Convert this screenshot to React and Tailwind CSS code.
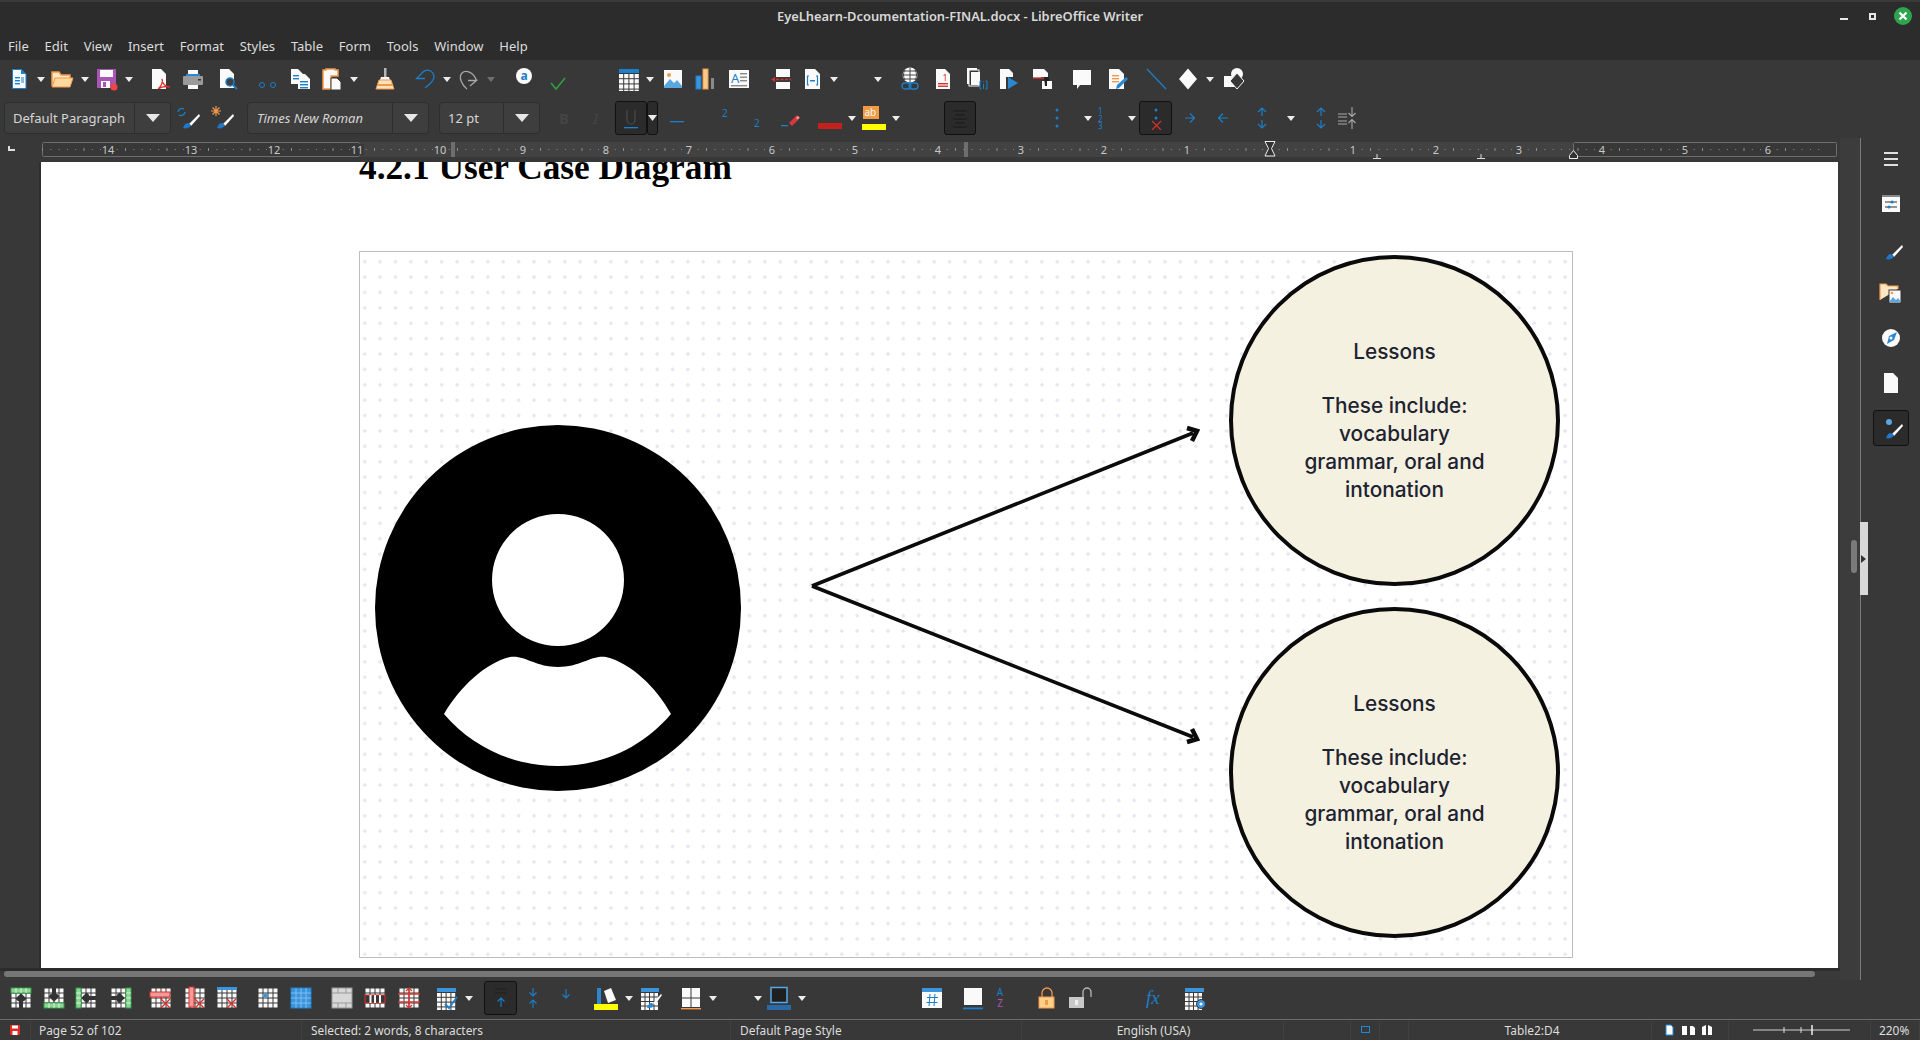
const Svg = ({ children, w = 24 }) => (
  <svg width={w} height="24" viewBox={`0 0 ${w} 24`} fill="none">
    {children}
  </svg>
);

const W = "#fafafa";
const B = "#1c7fc9";
const O = "#f2994a";
const R = "#d9302c";

// page with a folded corner, shared by many toolbar icons
const Page = ({ x = 5, y = 2, w = 14, h = 20, f = W }) => (
  <path d={`M${x} ${y}h${w - 5}l5 5v${h - 5}h-${w}z`} fill={f} />
);

const lines = (x, y, w, n, c = B, step = 3) =>
  Array.from({ length: n }).map((_, i) => (
    <rect key={i} x={x} y={y + i * step} width={w} height="1.4" fill={c} />
  ));

const Grid = ({ x = 3, y = 3, n = 4, s = 4.5, c = W }) => (
  <g>
    {Array.from({ length: n * n }).map((_, i) => (
      <rect key={i} x={x + (i % n) * s} y={y + Math.floor(i / n) * s} width={s - 1} height={s - 1} fill={c} />
    ))}
  </g>
);

const Caret = () => (
  <svg width="10" height="24" viewBox="0 0 10 24">
    <path d="M1 10h8l-4 5z" fill="#ededed" />
  </svg>
);

const NewDoc = () => (
  <Svg>
    <path d="M5.5 2.5h9l4.5 4.500v14.500h-13.500z" fill={W} stroke={B} />
    <path d="M14 2l5 5h-5z" fill={B} />
    {lines(8, 10, 5, 3)}
    <rect x="14" y="10" width="3" height="6" fill={B} opacity=".5" />
  </Svg>
);
const Open = () => (
  <Svg>
    <path d="M2 19V5h7l2 3h9v3" stroke={O} strokeWidth="1.500" fill="#fde7c3" />
    <path d="M2 20l3-9h18l-3 9z" fill="#fdd9a0" stroke={O} />
  </Svg>
);
const Save = () => (
  <Svg>
    <rect x="2" y="2" width="19" height="19" fill="#a855b5" />
    <rect x="5" y="3" width="13" height="7" fill={W} />
    <rect x="6" y="14" width="9" height="7" fill={W} />
    <rect x="8" y="15" width="3" height="5" fill="#a855b5" />
    <circle cx="19" cy="20" r="3.500" fill="#ef4444" />
  </Svg>
);
const Pdf = () => (
  <Svg>
    <Page x={4} w={14} />
    <path d="M10 22c4-3 5-8 4-10 0 4 3 8 8 8-4-1-9 0-12 2z" stroke={R} strokeWidth="1.300" />
  </Svg>
);
const Print = () => (
  <Svg>
    <rect x="7" y="3" width="10" height="5" fill={W} />
    <rect x="5" y="7" width="14" height="3" fill="#2b88d0" />
    <rect x="2" y="9" width="20" height="9" rx="1" fill="#9a9a9a" />
    <rect x="17" y="12" width="3" height="1.500" fill="#333" />
    <rect x="7" y="18" width="10" height="4" fill={W} />
  </Svg>
);
const Preview = () => (
  <Svg>
    <Page x={4} w={14} h={19} />
    <circle cx="14" cy="15" r="4" fill="#3f3f3f" stroke={B} strokeWidth="1.500" />
    <path d="M17 18l4 4" stroke={B} strokeWidth="1.800" />
  </Svg>
);
const Cut = () => (
  <Svg>
    <circle cx="7" cy="18" r="2.500" stroke={B} />
    <circle cx="18" cy="18" r="2.500" stroke={B} />
  </Svg>
);
const Copy = () => (
  <Svg>
    <Page x={3} y={2} w={12} h={15} />
    <Page x={10} y={7} w={12} h={15} />
    {lines(5, 8, 6, 2)}
    {lines(12, 14, 8, 3)}
  </Svg>
);
const Paste = () => (
  <Svg>
    <path d="M3 3h3V2h9v1h3v6h-7v13H3z" fill={W} stroke={O} strokeWidth="1.500" />
    <path d="M11 11h6l4 4v8H11z" fill={W} stroke="#383838" />
  </Svg>
);
const Clone = () => (
  <Svg>
    <rect x="11" y="1" width="2.500" height="9" fill="#b5b5b5" />
    <path d="M8 10h8l1 3H7z" fill={W} />
    <path d="M6 13h12l3 9H3z" fill="#fbe3bf" stroke={O} />
    <path d="M5 18h14" stroke={O} strokeWidth="2" />
  </Svg>
);
const Undo = () => (
  <Svg>
    <path d="M13 11.500H4.500L11 5C15 1 22 4 22 10C22 14 17 18 13 21" stroke={B} strokeWidth="1.300" />
  </Svg>
);
const Redo = () => (
  <Svg>
    <path d="M11 13.500H19.500L13 19M19.500 13.500C17 6 9 2 5 6C1 10 5 18 10 22" stroke="#a8a8a8" strokeWidth="1.300" />
  </Svg>
);
const ACircle = () => (
  <Svg>
    <circle cx="11" cy="9" r="8" fill={W} />
    <text x="11" y="13" textAnchor="middle" fontSize="12" fontWeight="700" fill={B} fontFamily="Noto Sans, sans-serif">a</text>
  </Svg>
);
const Check = () => (
  <Svg>
    <path d="M3 16l5 6 9-11" stroke="#2ea043" strokeWidth="1.500" />
  </Svg>
);
const Table = () => (
  <Svg>
    <rect x="3" y="2" width="20" height="4" fill={B} />
    <Grid x={3} y={7} n={4} s={5.2} />
  </Svg>
);
const Image = () => (
  <Svg>
    <rect x="3" y="3" width="18" height="18" fill={W} />
    <circle cx="8" cy="8" r="2" fill={O} />
    <path d="M3 19l6-7 4 4 3-3 5 6v2H3z" fill="#5aa7e0" />
  </Svg>
);
const Chart = () => (
  <Svg>
    <rect x="3" y="9" width="5" height="13" fill="#3b94dc" stroke={B} />
    <rect x="10" y="2" width="5" height="20" fill="#fbc98a" stroke={O} />
    <rect x="18" y="11" width="3" height="11" fill="#8a8a8a" />
  </Svg>
);
const TextBox = () => (
  <Svg>
    <rect x="2" y="3" width="20" height="18" fill={W} />
    <text x="4" y="16" fontSize="13" fill={B} fontFamily="Noto Sans, sans-serif">A</text>
    {lines(13, 6, 7, 3, "#888", 3.500)}
    <rect x="4" y="18" width="16" height="1.400" fill="#888" />
  </Svg>
);
const PageBreak = () => (
  <Svg>
    <rect x="7" y="2" width="14" height="8" fill={W} />
    <rect x="7" y="15" width="14" height="7" fill={W} />
    <path d="M7 12.500h15" stroke={R} strokeDasharray="3 1.500" strokeWidth="1.300" />
    <path d="M2 12.500l4-2.500v5z" fill={R} />
  </Svg>
);
const Field = () => (
  <Svg>
    <Page x={5} w={15} />
    <path d="M9 9H7.500v9H9M16 9h1.500v9H16" stroke={B} strokeWidth="1.200" />
    <rect x="10" y="13" width="5" height="1.500" fill={B} />
  </Svg>
);
const Hyper = () => (
  <Svg>
    <circle cx="12" cy="8" r="7.500" fill={W} />
    <path d="M4 8h16M12 1v14M7 3c-2 3-2 7 0 10M17 3c2 3 2 7 0 10M5 4h14M5 12h14" stroke="#383838" strokeWidth=".9" />
    <rect x="4" y="16" width="9" height="6" rx="3" stroke={B} strokeWidth="1.300" />
    <rect x="11" y="16" width="9" height="6" rx="3" stroke={B} strokeWidth="1.300" />
  </Svg>
);
const Footnote = () => (
  <Svg>
    <Page x={5} w={14} />
    <text x="14" y="14" textAnchor="middle" fontSize="9" fill={R} fontFamily="Noto Sans, sans-serif">1</text>
    {lines(7, 16, 10, 2, R, 2.500)}
  </Svg>
);
const Endnote = () => (
  <Svg>
    <rect x="3" y="1" width="10" height="16" fill={W} />
    <rect x="5" y="3" width="10" height="16" fill="#383838" stroke={W} />
    <rect x="7" y="5" width="9" height="13" fill={W} />
    <path d="M17.500 14H16v8h1.500M21.500 14H23v8h-1.500M19.500 17v5" stroke={B} />
    <rect x="19" y="14.500" width="1" height="1" fill={B} />
  </Svg>
);
const Bookmark = () => (
  <Svg>
    <path d="M3 2h9l4 4v4H9v12H3z" fill={W} />
    <path d="M11 10l10 6-10 6z" fill="#2b88d0" />
  </Svg>
);
const CrossRef = () => (
  <Svg>
    <rect x="3" y="2" width="8" height="9" fill={W} />
    <path d="M11 2h3l4 4v4h-7z" fill={W} />
    <rect x="12" y="14" width="10" height="8" fill={W} />
    <path d="M3 11h13" stroke={R} strokeWidth="1.400" />
    <path d="M14 10h5v4h-2v5h-2z" fill="#222" />
  </Svg>
);
const Comment = () => (
  <Svg>
    <path d="M3 3h18v15H10l-3 4v-4H3z" fill={W} />
  </Svg>
);
const Track = () => (
  <Svg>
    <Page x={4} w={15} />
    {lines(7, 8, 7, 3, O, 3)}
    <path d="M11 22l1-4 9-8 2 2-9 9z" fill="#2b88d0" />
  </Svg>
);
const Line = () => (
  <Svg>
    <path d="M3 2l19 20" stroke={B} strokeWidth="1.300" />
  </Svg>
);
const Diamond = () => (
  <Svg>
    <path d="M12 1.500l9 10.500-9 10.500-9-10.500z" fill={W} />
  </Svg>
);
const Shapes = () => (
  <Svg>
    <rect x="2" y="9" width="11" height="11" fill={W} />
    <circle cx="15" cy="7" r="6" fill={W} />
    <path d="M15 6l7 8-7 8-7-8z" fill="#383838" stroke={W} />
  </Svg>
);

const Brush = ({ children }) => (
  <Svg w={28}>
    {children}
    <path d="M25 8L15 18l2 2L26 10z" fill={W} />
    <path d="M14 17c-3 0-4 3-5 5 3 1 7 0 8-3z" fill="#1f77c9" />
  </Svg>
);
const Strike = () => (
  <Svg>
    <rect x="6" y="15" width="14" height="1.300" fill={B} />
  </Svg>
);
const Super = () => (
  <Svg>
    <text x="12" y="11" fontSize="10" fill={B} fontFamily="Noto Sans, sans-serif">2</text>
  </Svg>
);
const Sub = () => (
  <Svg>
    <text x="11" y="21" fontSize="10" fill={B} fontFamily="Noto Sans, sans-serif">2</text>
  </Svg>
);
const Eraser = () => (
  <Svg>
    <path d="M11 17l8-8 3 3-8 8z" fill="#d9363e" />
    <path d="M18 12l2-2 1.500 1.500-2 2z" fill="#f3a0a0" />
    <rect x="3" y="19" width="7" height="1.300" fill={B} />
  </Svg>
);
const FontColor = () => (
  <Svg>
    <rect y="17" width="24" height="6" fill="#c4201c" />
  </Svg>
);
const Highlight = () => (
  <Svg>
    <rect x="1" y="0" width="16" height="13" fill="#f39a43" />
    <text x="2.500" y="10" fontSize="10" fill={W} fontFamily="Noto Sans, sans-serif">ab</text>
    <rect y="18" width="24" height="6" fill="#ffff00" />
  </Svg>
);
const Dots = ({ red }) => (
  <Svg>
    <circle cx="12" cy="4" r="1.500" fill={B} />
    <circle cx="12" cy="12" r="1.500" fill={B} />
    {!red && <circle cx="12" cy="20" r="1.500" fill={B} />}
    {red && <path d="M8 15l9 9M17 15l-9 9" stroke={R} strokeWidth="1.200" />}
  </Svg>
);
const Nums = () => (
  <Svg w={16}>
    <text x="4" y="8" fontSize="8" fill={B} fontFamily="Noto Sans, sans-serif">1</text>
    <text x="4" y="15.500" fontSize="8" fill={B} fontFamily="Noto Sans, sans-serif">2</text>
    <text x="4" y="23" fontSize="8" fill={B} fontFamily="Noto Sans, sans-serif">3</text>
  </Svg>
);
const ArrowR = () => (
  <Svg>
    <path d="M7 12h9M12 7.500l4.500 4.500-4.500 4.500" stroke={B} strokeWidth="1.200" />
  </Svg>
);
const ArrowL = () => (
  <Svg>
    <path d="M17 12H8M12 7.500L7.500 12l4.500 4.500" stroke={B} strokeWidth="1.200" />
  </Svg>
);
const UpDown = () => (
  <Svg>
    <path d="M12 2v8M8 6l4-4 4 4M12 22v-8M8 18l4 4 4-4" stroke={B} strokeWidth="1.200" />
  </Svg>
);
const Spacing = () => (
  <Svg>
    <path d="M2 8h9M2 11h9M2 15h9M2 18h9" stroke="#a8a8a8" strokeWidth="1.200" />
    <path d="M16 1v9M12.500 7l3.500 3.500L19.500 7M16 23v-9M12.500 17l3.500-3.500 3.500 3.500" stroke="#a8a8a8" strokeWidth="1.100" />
  </Svg>
);

// bottom table toolbar
const TblInsert = ({ side }) => {
  const bars = {
    top: [2, 2, 20, 5],
    bottom: [2, 17, 20, 5],
    left: [2, 2, 5, 20],
    right: [17, 2, 5, 20],
  };
  const [x, y, w, h] = bars[side];
  const arrows = {
    top: "M8 14l4-4 4 4M12 10v12",
    bottom: "M8 9l4 4 4-4M12 13V2",
    left: "M14 8l-4 4 4 4M10 12h12",
    right: "M9 8l4 4-4 4M13 12H2",
  };
  const ticks = side === "top" || side === "bottom" ? `M7 ${y}v5M12 ${y}v5M17 ${y}v5` : `M${x} 7h5M${x} 12h5M${x} 17h5`;
  return (
    <Svg>
      <Grid x={2.500} y={2.500} n={4} s={5} />
      <path d={arrows[side]} stroke="#383838" strokeWidth="4" />
      <path d={arrows[side]} stroke="#333" strokeWidth="2.400" />
      <rect x={x} y={y} width={w} height={h} fill="#8fd694" stroke="#2f9e44" />
      <path d={ticks} stroke="#d8f3da" />
    </Svg>
  );
};
const TblDelete = ({ kind }) => (
  <Svg>
    <Grid x={2.500} y={2.500} n={4} s={5} />
    {kind === "row" && <rect x="1" y="6" width="20" height="5" fill="#f39a9a" stroke={R} />}
    {kind === "col" && <rect x="6" y="1" width="5" height="20" fill="#f39a9a" stroke={R} />}
    {kind === "table" && <rect x="2" y="1" width="20" height="3" fill="#3b94dc" />}
    <path d="M12 13l9 9M21 13l-9 9" stroke={R} strokeWidth="1.400" />
  </Svg>
);
const TblCell = () => (
  <Svg>
    <Grid x={2.500} y={2.500} n={4} s={5} />
    <rect x="7.500" y="7.500" width="4" height="4" fill="#3b94dc" />
  </Svg>
);
const TblAll = () => (
  <Svg>
    <rect x="2" y="2" width="20" height="20" fill="#3b94dc" stroke={B} />
    <path d="M7 2v20M12 2v20M17 2v20M2 7h20M2 12h20M2 17h20" stroke="#7fbdf0" />
  </Svg>
);
const TblMerge = () => (
  <Svg>
    <rect x="2" y="2" width="20" height="20" fill="#d8d8d8" stroke="#999" />
    <path d="M2 7h20M2 17h20M8 2v5M16 2v5M8 17v5M16 17v5" stroke="#999" />
  </Svg>
);
const TblSplit = () => (
  <Svg>
    <Grid x={2.500} y={2.500} n={4} s={5} />
    <rect x="2" y="9" width="20" height="8" fill="#383838" stroke={R} />
    <path d="M7.500 9v8M12 9v8M17 9v8" stroke={W} strokeWidth="2" />
  </Svg>
);
const TblHeight = () => (
  <Svg>
    <Grid x={2.500} y={2.500} n={4} s={5} />
    <path d="M1 8h22M1 16h22" stroke={R} strokeWidth="1.500" />
    <path d="M12 2v20M9 5l3-3 3 3M9 19l3 3 3-3" stroke={R} strokeWidth="1.200" />
  </Svg>
);
const TblCheck = () => (
  <Svg>
    <rect x="2" y="2" width="19" height="4" fill="#3b94dc" />
    <Grid x={2} y={7} n={4} s={4.800} />
    <path d="M10 18l4 4 8-11" stroke={B} strokeWidth="1.800" />
  </Svg>
);
const VTop = () => (
  <Svg>
    <path d="M12 21v-9M8.500 15.500L12 12l3.500 3.500" stroke={B} strokeWidth="1.100" />
    <path d="M6 3h12M6 7h12" stroke="#1f1f1f" strokeWidth="1.200" />
  </Svg>
);
const VMid = () => (
  <Svg>
    <path d="M12 2v8M8.500 6.500L12 10l3.500-3.500M12 22v-8M8.500 17.500L12 14l3.500 3.500" stroke={B} strokeWidth="1.100" />
  </Svg>
);
const VBot = () => (
  <Svg>
    <path d="M12 3v9M8.500 8.500L12 12l3.500-3.500" stroke={B} strokeWidth="1.100" />
  </Svg>
);
const BgFill = () => (
  <Svg>
    <rect y="18" width="24" height="6" fill="#ffff00" />
    <path d="M3 2h4v16H3z" fill="#2b88d0" />
    <path d="M10 5l7-3 5 12-8 3z" fill={W} />
  </Svg>
);
const AutoFmt = () => (
  <Svg>
    <rect x="2" y="2" width="18" height="4" fill="#3b94dc" />
    <Grid x={2} y={7} n={4} s={4.500} />
    <path d="M8 22c1-3 2-5 5-5l2 2c-1 3-4 3-7 3z" fill="#2b88d0" />
    <path d="M14 17l8-9 1 1-7 10z" fill={W} />
  </Svg>
);
const Borders = () => (
  <Svg>
    <path d="M3 2h8.500v9.500H3zM12.500 2H21v9.500h-8.500zM3 12.500h8.500V21H3zM12.500 12.500H21V21h-8.500z" fill={W} />
    <rect x="2" y="22" width="20" height="1.400" fill={O} />
  </Svg>
);
const BorderColor = () => (
  <Svg>
    <rect x="4" y="1.500" width="16" height="15" fill="#1f1f1f" stroke="#55a8e8" strokeWidth="1.500" />
    <rect y="19" width="24" height="5" fill="#2b6aa8" />
  </Svg>
);
const NumFmt = () => (
  <Svg>
    <rect x="2" y="2" width="20" height="20" fill={W} />
    <rect x="2" y="2" width="20" height="4" fill="#3b94dc" />
    <path d="M10 8l-1 12M15 8l-1 12M7 11.500h11M6.500 16.500h11" stroke={B} />
  </Svg>
);
const Caption = () => (
  <Svg>
    <rect x="3" y="2" width="18" height="17" fill={W} />
    <rect x="2" y="21.500" width="20" height="1.800" fill={B} />
  </Svg>
);
const Sort = () => (
  <Svg>
    <text x="12" y="10" textAnchor="middle" fontSize="10" fill={B} fontFamily="Noto Sans, sans-serif">A</text>
    <text x="12" y="21" textAnchor="middle" fontSize="10" fill="#a855b5" fontFamily="Noto Sans, sans-serif">Z</text>
  </Svg>
);
const LockOn = () => (
  <Svg>
    <path d="M7 11V7a5 5 0 0110 0v4" stroke={O} strokeWidth="1.300" />
    <rect x="4" y="11" width="15" height="11" fill="#fbd089" stroke={O} />
    <rect x="10" y="14" width="3" height="5" fill={O} />
  </Svg>
);
const LockOff = () => (
  <Svg>
    <path d="M15 11V6a4 4 0 018 0v5" stroke="#b8b8b8" strokeWidth="1.300" />
    <rect x="1" y="11" width="15" height="11" fill="#c8c8c8" />
    <rect x="7" y="14" width="3" height="5" fill="#eee" />
  </Svg>
);
const Fx = () => (
  <Svg>
    <text x="3" y="18" fontSize="19" fontStyle="italic" fill={B} fontFamily="Liberation Serif, serif">fx</text>
  </Svg>
);
const TblProps = () => (
  <Svg>
    <rect x="2" y="2" width="19" height="4" fill="#3b94dc" />
    <Grid x={2} y={7} n={4} s={4.500} />
    <circle cx="18" cy="18" r="4.500" fill="#3b94dc" stroke="#383838" />
    <circle cx="18" cy="18" r="1.500" fill={W} />
  </Svg>
);

// right sidebar
const SideIcons = [
  <Svg key="menu">
    <path d="M5 6h14M5 12h14M5 18h14" stroke="#e0e0e0" strokeWidth="2.200" />
  </Svg>,
  <Svg key="props">
    <rect x="3" y="3" width="18" height="2" fill="#888" />
    <rect x="3" y="5" width="18" height="15" fill={W} />
    <path d="M6 10h12M6 15h12" stroke="#333" />
    <circle cx="13" cy="10" r="1.600" fill={B} />
    <circle cx="10" cy="15" r="1.600" fill={B} />
  </Svg>,
  <Brush key="styles" />,
  <Svg key="gallery">
    <path d="M1 19V3h6l2 2h10v3" fill="#fde7c3" stroke={O} strokeWidth="1.200" />
    <rect x="10" y="9" width="12" height="13" fill={W} stroke="#333" />
    <circle cx="13" cy="12" r="1.300" fill={O} />
    <path d="M10 21l4-5 3 3 2-2 3 4z" fill="#5aa7e0" />
  </Svg>,
  <Svg key="nav">
    <circle cx="12" cy="12" r="9" fill={W} />
    <path d="M18 6l-3 8-7 4 2-8z" fill="#2b88d0" />
    <circle cx="12" cy="12" r="1.500" fill={W} />
  </Svg>,
  <Svg key="page">
    <Page x={5} w={14} />
  </Svg>,
];

const top = [
  ["ml-[7px]", NewDoc], ["ml-[5px]", Caret], ["ml-[4px]", Open], ["ml-[6px]", Caret], ["ml-[5px]", Save], ["ml-[5px]", Caret],
  ["ml-[14px]", Pdf], ["ml-[9px]", Print], ["ml-[11px]", Preview], ["ml-[15px]", Cut], ["ml-[9px]", Copy], ["ml-[8px]", Paste],
  ["ml-[5px]", Caret], ["ml-[14px]", Clone], ["ml-[15px]", Undo], ["ml-[6px]", Caret], ["ml-[5px]", Redo], ["ml-[5px] opacity-30", Caret],
  ["ml-[17px]", ACircle], ["ml-[11px]", Check], ["ml-[44px]", Table], ["ml-[5px]", Caret], ["ml-[6px]", Image], ["ml-[8px]", Chart],
  ["ml-[10px]", TextBox], ["ml-[18px]", PageBreak], ["ml-[7px]", Field], ["ml-[5px]", Caret], ["ml-[34px]", Caret], ["ml-[15px]", Hyper],
  ["ml-[9px]", Footnote], ["ml-[9px]", Endnote], ["ml-[9px]", Bookmark], ["ml-[9px]", CrossRef], ["ml-[16px]", Comment], ["ml-[11px]", Track],
  ["ml-[15px]", Line], ["ml-[8px]", Diamond], ["ml-[5px]", Caret], ["ml-[7px]", Shapes],
];

const bottom = [
  ["ml-[9px]", () => <TblInsert side="top" />], ["ml-[9px]", () => <TblInsert side="bottom" />], ["ml-[8px]", () => <TblInsert side="left" />],
  ["ml-[11px]", () => <TblInsert side="right" />], ["ml-[16px]", () => <TblDelete kind="row" />], ["ml-[10px]", () => <TblDelete kind="col" />],
  ["ml-[8px]", () => <TblDelete kind="table" />], ["ml-[17px]", TblCell], ["ml-[9px]", TblAll], ["ml-[17px]", TblMerge], ["ml-[9px]", TblSplit],
  ["ml-[10px]", TblHeight], ["ml-[14px]", TblCheck], ["ml-[5px]", Caret],
];

const bottom2 = [
  ["ml-[4px]", VMid], ["ml-[9px]", VBot], ["ml-[16px]", BgFill], ["ml-[6px]", Caret], ["ml-[5px]", AutoFmt], ["ml-[16px]", Borders], ["ml-[5px]", Caret],
  ["ml-[35px]", Caret], ["ml-[4px]", BorderColor], ["ml-[6px]", Caret], ["ml-[113px]", NumFmt], ["ml-[17px]", Caption], ["ml-[3px]", Sort],
  ["ml-[23px]", LockOn], ["ml-[9px]", LockOff], ["ml-[51px]", Fx], ["ml-[16px]", TblProps],
];

const Items = ({ list }) =>
  list.map(([cls, Icon], i) => (
    <div key={i} className={cls}>
      <Icon />
    </div>
  ));

const Combo = ({ className, label, labelClass, split }) => (
  <div className={`flex h-[32px] rounded-[4px] border border-[#2e2e2e] bg-[#3e3e3e] ${className}`}>
    <div className={`flex-1 overflow-hidden whitespace-nowrap pl-[8px] leading-[30px] text-[13px] text-[#d6d6d6] ${labelClass}`}>{label}</div>
    <div className={`flex items-center justify-center border-l border-[#2e2e2e] ${split}`}>
      <svg width="14" height="8" viewBox="0 0 14 8">
        <path d="M0 0h14L7 8z" fill="#e6e6e6" />
      </svg>
    </div>
  </div>
);

const Pressed = ({ className, children }) => (
  <div className={`flex h-[34px] items-center justify-center rounded-[3px] border border-[#111] bg-[#2b2b2b] ${className}`}>{children}</div>
);

const marks = [
  [14, 108], [13, 191], [12, 274], [11, 357], [10, 440], [9, 523], [8, 606], [7, 689], [6, 772], [5, 855], [4, 938], [3, 1021], [2, 1104], [1, 1187],
  [1, 1353], [2, 1436], [3, 1519], [4, 1602], [5, 1685], [6, 1768],
];

const Ruler = () => (
  <svg width="1840" height="24" viewBox="0 0 1840 24" className="block">
    <path d="M8 8v5h7v-2h-5V8z" fill="#ddd" />
    <rect x="360" y="4" width="1213" height="15" fill="#424242" />
    <rect x="42.500" y="4.500" width="317" height="14" rx="1" stroke="#6e6e6e" fill="#383838" />
    <rect x="1573.500" y="4.500" width="263" height="14" rx="1" stroke="#6e6e6e" fill="#383838" />
    {Array.from({ length: 215 }).map((_, i) => {
      const x = 42 + i * 8.3;
      const big = i % 5 === 0;
      return <rect key={i} x={x} y={big ? 10 : 11} width="1" height={big ? 3 : 1} fill="#8d8d8d" />;
    })}
    {marks.map(([n, x], i) => (
      <g key={i}>
        <rect x={x - 7} y="6" width="14" height="11" fill={x > 360 && x < 1573 ? "#424242" : "#383838"} />
        <text x={x} y="15.500" textAnchor="middle" fontSize="11" fill="#c8c8c8" fontFamily="Noto Sans, sans-serif">
          {n}
        </text>
      </g>
    ))}
    <path d="M452 4v15M454 4v15M965 4v15M967 4v15" stroke="#9a9a9a" />
    <path d="M1265 3.500h10l-3.500 7 3.500 7.500h-10l3.500-7.500z" fill="#333" stroke="#eee" />
    <path d="M1373 20.500h8M1377 16v4M1477 20.500h8M1481 16v4" stroke="#ddd" />
    <path d="M1569.500 20.500v-3l4-5 4 5v3z" fill="#333" stroke="#eee" />
  </svg>
);

const Avatar = () => (
  <svg width="366" height="366" viewBox="0 0 366 366" className="mt-[173px] ml-[15px] shrink-0">
    <circle cx="183" cy="183" r="183" fill="#000" />
    <circle cx="183" cy="155" r="66" fill="#fff" />
    <path
      d="M69 289C85 262 110 238 135 232C150 230 160 242 183 242C206 242 216 230 231 232C256 238 281 262 296 289C268 322 228 341 183 341C138 341 97 322 69 289Z"
      fill="#fff"
    />
  </svg>
);

const Arrows = () => (
  <svg width="400" height="330" viewBox="0 0 400 330" className="mt-[168px] ml-[64px] shrink-0">
    <path d="M7 166L388 13M7 166L388 317" stroke="#0b0b0b" strokeWidth="3.600" fill="none" />
    <path d="M382 8L392 11L387 21M387 309L392 319L382 322" stroke="#0b0b0b" strokeWidth="4.500" fill="none" />
  </svg>
);

const Lesson = () => (
  <div className="flex h-[331px] w-[331px] flex-col items-center justify-center rounded-full border-[4.500px] border-[#0a0a0a] bg-[#f5f1e1] font-['Inter',sans-serif] text-[20.800px] leading-[28px] font-medium text-[#1d2330]">
    <div>Lessons</div>
    <div className="h-[26px]" />
    <div>These include:</div>
    <div>vocabulary</div>
    <div>grammar, oral and</div>
    <div>intonation</div>
  </div>
);

const Dim = ({ className, children }) => <span className={`w-[12px] text-[15px] text-[#454545] ${className}`}>{children}</span>;

export default function App() {
  return (
    <div className="flex h-[1040px] w-[1920px] flex-col overflow-hidden bg-[#383838] font-['Noto_Sans',sans-serif]">
      {/* title bar */}
      <div className="relative flex h-[32px] items-center justify-center border-t-2 border-[#3a3a3a] bg-[#2c2c2c] text-[12.900px] font-semibold text-[#d8d8d8]">
        EyeLhearn-Dcoumentation-FINAL.docx - LibreOffice Writer
        <div className="absolute top-[5px] right-[8px] flex items-center">
          <div className="mt-[6px] h-[2px] w-[8px] bg-[#e6e6e6]" />
          <div className="ml-[21px] h-[7px] w-[7px] border-2 border-[#e6e6e6] bg-[#2c2c2c]" />
          <div className="ml-[18px] flex h-[18px] w-[18px] items-center justify-center rounded-full bg-[#2ea44f]">
            <svg width="10" height="10" viewBox="0 0 10 10">
              <path d="M1.500 1.500l7 7M8.500 1.500l-7 7" stroke="#fff" strokeWidth="2.200" />
            </svg>
          </div>
        </div>
      </div>

      {/* menu bar */}
      <div className="flex h-[28px] items-center gap-[15.800px] bg-[#2c2c2c] px-[8px] pt-[1px] text-[13px] text-[#dcdcdc]">
        {["File", "Edit", "View", "Insert", "Format", "Styles", "Table", "Form", "Tools", "Window", "Help"].map((m) => (
          <span key={m}>{m}</span>
        ))}
      </div>

      {/* standard toolbar */}
      <div className="flex h-[40px] items-center pb-[2px]">
        <Items list={top} />
      </div>

      {/* formatting toolbar */}
      <div className="flex h-[38px] items-center pb-[2px]">
        <Combo className="ml-[4px] w-[167px]" label="Default Paragraph" labelClass="" split="w-[36px]" />
        <div className="ml-[3px]">
          <Brush>
            <path d="M4 6a4 4 0 016-3M11 6a4 4 0 01-6 3" stroke={B} strokeWidth="1.300" />
          </Brush>
        </div>
        <div className="ml-[6px]">
          <Brush>
            <path d="M8 0v10M3 5h10M4.500 1.500l7 7M11.500 1.500l-7 7" stroke={O} strokeWidth="1.200" />
          </Brush>
        </div>
        <Combo className="ml-[11px] w-[182px]" label="Times New Roman" labelClass="italic pl-[9px] text-[12.300px]" split="w-[36px]" />
        <Combo className="ml-[10px] w-[101px]" label="12 pt" labelClass="" split="w-[36px]" />
        <Dim className="ml-[19px] font-bold">B</Dim>
        <Dim className="ml-[22px] italic">I</Dim>
        <div className="ml-[10px] flex">
          <Pressed className="w-[32px]">
            <svg width="16" height="24" viewBox="0 0 16 24" fill="none">
              <path d="M4 4v10a4 4 0 008 0V4" stroke="#4a4a4a" strokeWidth="1.200" />
              <rect x="1" y="21" width="14" height="1.300" fill={B} />
            </svg>
          </Pressed>
          <Pressed className="w-[11px]">
            <svg width="9" height="6" viewBox="0 0 9 6">
              <path d="M0 0h9L4.500 6z" fill="#ededed" />
            </svg>
          </Pressed>
        </div>
        <div className="ml-[6px]"><Strike /></div>
        <div className="ml-[22px]"><Super /></div>
        <div className="ml-[9px]"><Sub /></div>
        <div className="ml-[11px]"><Eraser /></div>
        <div className="ml-[16px]"><FontColor /></div>
        <div className="ml-[5px]"><Caret /></div>
        <div className="ml-[5px]"><Highlight /></div>
        <div className="ml-[5px]"><Caret /></div>
        <Pressed className="ml-[43px] w-[32px]">
          <svg width="16" height="24" viewBox="0 0 16 24" fill="none">
            <path d="M1 5h14M3 9h10M1 13h14M3 17h10M1 21h14" stroke="#1a1a1a" strokeWidth="1.200" />
          </svg>
        </Pressed>
        <div className="ml-[69px]"><Dots /></div>
        <div className="ml-[14px]"><Caret /></div>
        <div className="ml-[1px]"><Nums /></div>
        <div className="ml-[17px]"><Caret /></div>
        <Pressed className="ml-[2px] w-[33px]"><Dots red /></Pressed>
        <div className="ml-[6px]"><ArrowR /></div>
        <div className="ml-[9px]"><ArrowL /></div>
        <div className="ml-[15px]"><UpDown /></div>
        <div className="ml-[12px]"><Caret /></div>
        <div className="ml-[13px]"><UpDown /></div>
        <div className="ml-[3px]"><Spacing /></div>
      </div>

      {/* work area */}
      <div className="flex min-h-0 flex-1">
        <div className="flex w-[1840px] flex-col">
          <Ruler />
          <div className="min-h-0 flex-1 pl-[41px] pr-[2px]">
            <div className="h-full overflow-hidden bg-white pl-[318px] shadow-[-2px_0_0_#2e2e2e]">
              <div className="-mt-[14px] h-[40px] font-['Liberation_Serif',serif] text-[35.300px] leading-[40px] font-bold text-black">
                4.2.1 User Case Diagram
              </div>
              <div className="mt-[63px] flex h-[707px] w-[1214px] border-[1.500px] border-[#bdbdbd] bg-[radial-gradient(#e4e7ef_1.500px,transparent_1.600px)] bg-size-[15.400px_15.400px] bg-position-[-3px_2px]">
                <Avatar />
                <Arrows />
                <div className="mt-[3px] ml-[24px] flex flex-col gap-[21px]">
                  <Lesson />
                  <Lesson />
                </div>
              </div>
            </div>
          </div>
          <div className="flex h-[12px] items-start bg-[#3a3a3a] border-t-[3px] border-[#2c2c2c]">
            <div className="ml-[4px] h-[6px] w-[1811px] rounded-[3px] bg-[#777]" />
          </div>
        </div>

        {/* vertical scrollbar */}
        <div className="relative w-[20px] bg-[#3c3c3c]">
          <div className="absolute top-[402px] left-[11px] h-[33px] w-[6px] rounded-[3px] bg-[#7a7a7a]" />
        </div>

        {/* sidebar */}
        <div className="relative flex w-[60px] flex-col items-center border-l border-[#7a7a7a] pt-[9px] pl-[1px]">
          <div className="absolute top-[384px] -left-[1px] flex h-[73px] w-[8px] items-center bg-[#d9d9d9]">
            <svg width="6" height="8" viewBox="0 0 6 8">
              <path d="M1 0l5 4-5 4z" fill="#333" />
            </svg>
          </div>
          <div className="flex flex-col items-center gap-[20.800px]">
            {SideIcons}
          </div>
          <Pressed className="mt-[15px] h-[36px] w-[36px]">
            <Brush>
              <circle cx="12" cy="6" r="3" fill="#5aa7e0" />
            </Brush>
          </Pressed>
        </div>
      </div>

      {/* table toolbar */}
      <div className="flex h-[39px] items-center pb-[3px]">
        <Items list={bottom} />
        <Pressed className="ml-[10px] w-[33px]"><VTop /></Pressed>
        <Items list={bottom2} />
      </div>

      {/* status bar */}
      <div className="flex h-[21px] items-center border-t border-[#6b6b6b] pb-[1px] text-[11.900px] whitespace-nowrap text-[#dedede] [&>div]:h-[18px] [&>div]:border-r [&>div]:border-[#414141] [&>div]:leading-[18px]">
        <div className="flex w-[31px] items-center justify-center">
          <svg width="12" height="12" viewBox="0 0 12 12">
            <rect x="1" y="1" width="10" height="10" fill="#e02b20" />
            <rect x="3" y="1.500" width="6" height="3" fill="#fff" />
            <rect x="3.500" y="7" width="5" height="4" fill="#fff" />
          </svg>
        </div>
        <div className="w-[271px] pl-[8px]">Page 52 of 102</div>
        <div className="w-[429px] pl-[9px]">Selected: 2 words, 8 characters</div>
        <div className="w-[291px] pl-[9px]">Default Page Style</div>
        <div className="w-[262px] pl-[2px] text-center">English (USA)</div>
        <div className="w-[67px]" />
        <div className="flex w-[29px] items-center justify-center">
          <div className="h-[7px] w-[9px] border border-[#1c8ad8]" />
        </div>
        <div className="w-[29px]" />
        <div className="w-[243px] pl-[4px] text-center">Table2:D4</div>
        <div className="flex w-[77px] items-center pl-[13px]">
          <svg width="54" height="12" viewBox="0 0 54 12">
            <path d="M1 1h5l2 2v8H1z" fill="#fff" stroke="#1c8ad8" />
            <path d="M17 2h5v9h-5zM25 2h3l2 2v7h-5zM37 3l4-2v10h-4zM43 1l4 2v8h-4z" fill="#fff" />
          </svg>
        </div>
        <div className="flex w-[142px] items-center pl-[24px]">
          <svg width="98" height="12" viewBox="0 0 98 12">
            <path d="M0 6h97" stroke="#cfcfcf" />
            <path d="M31 3v6M48 3v6" stroke="#dedede" />
            <path d="M59 1v10" stroke="#eee" strokeWidth="1.500" />
          </svg>
        </div>
        <div className="flex-1 border-r-0 pl-[8px]">220%</div>
      </div>
    </div>
  );
}
